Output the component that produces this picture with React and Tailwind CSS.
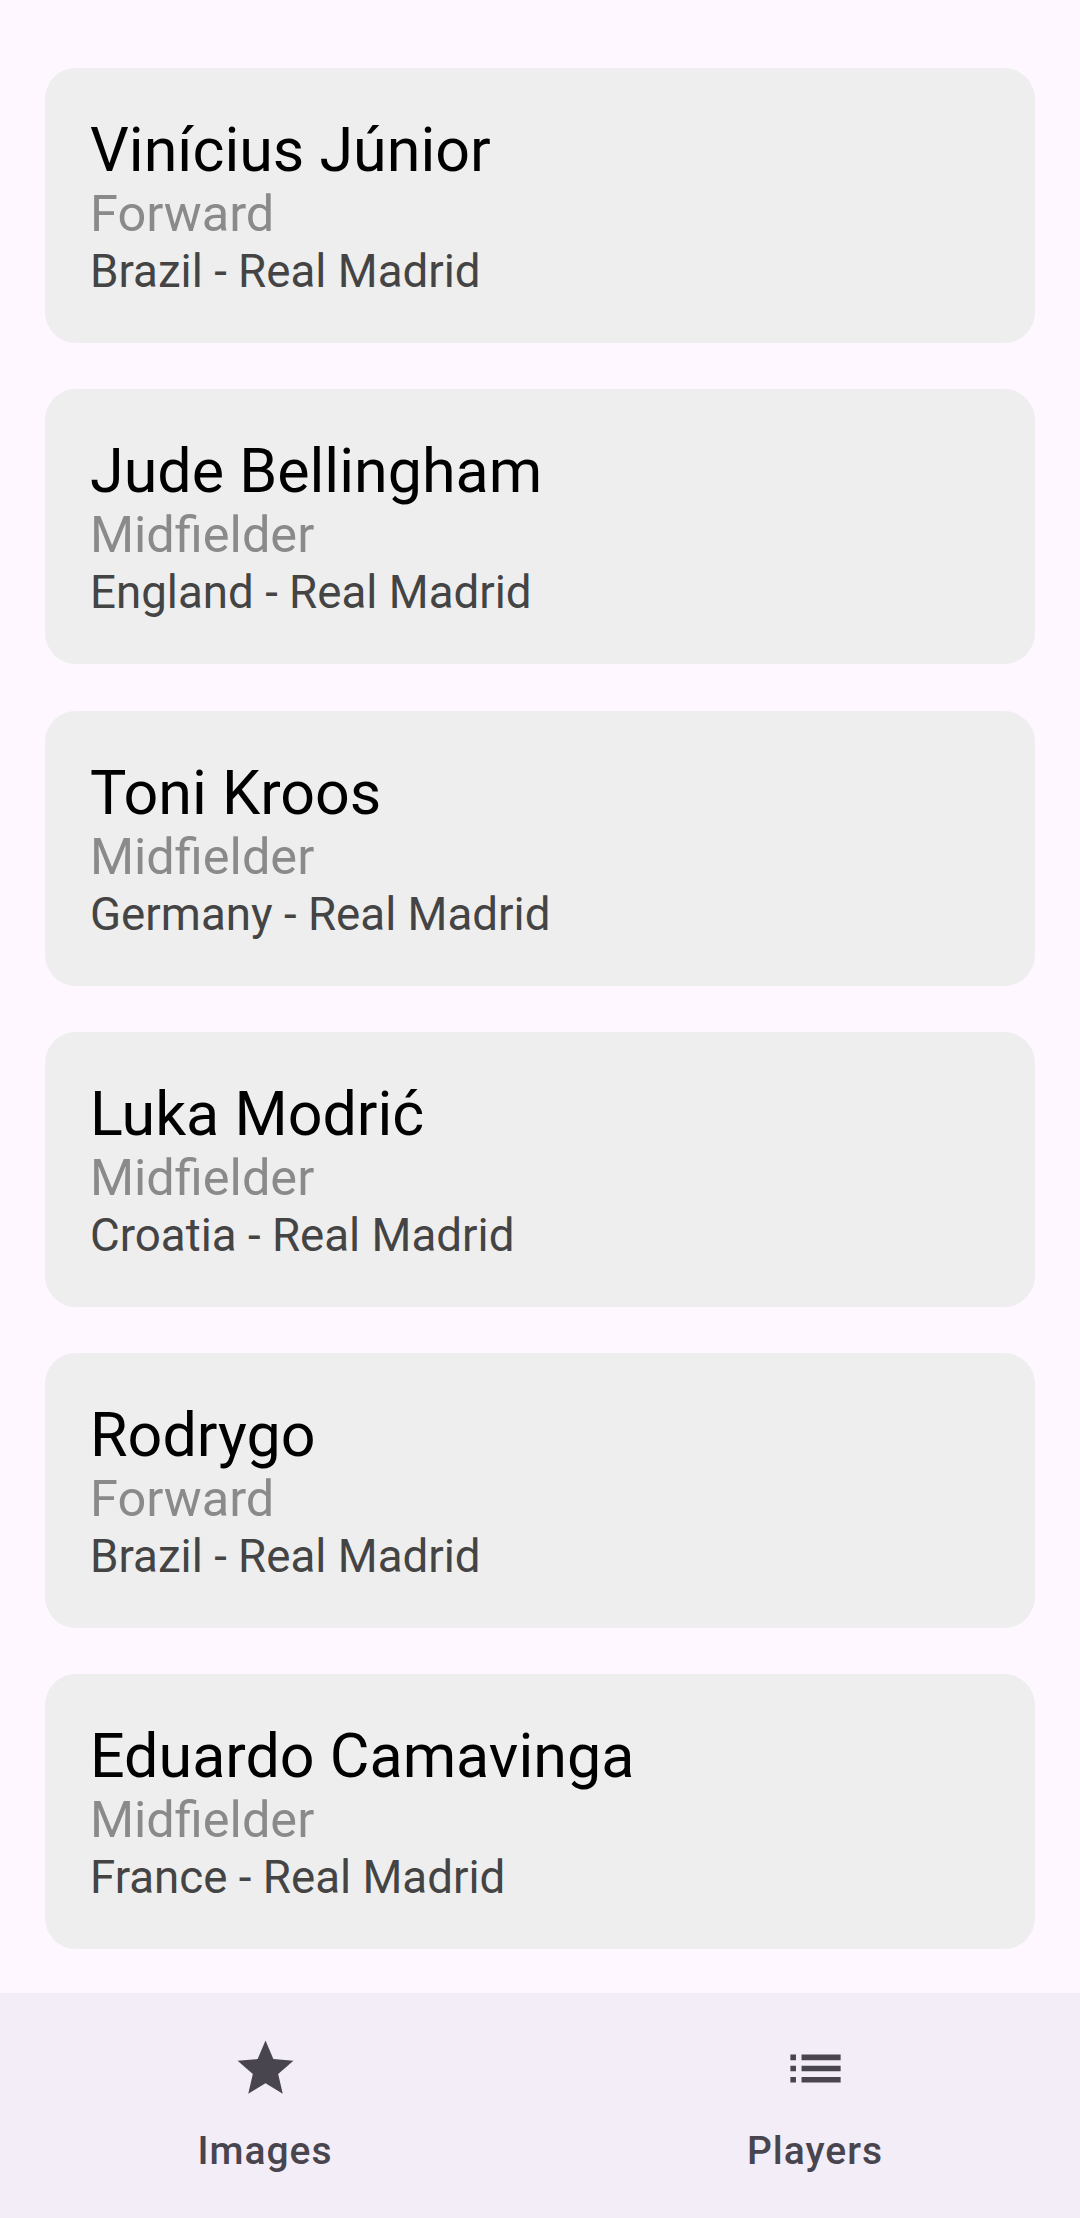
const players = [
  { name: "Vinícius Júnior", position: "Forward", country: "Brazil" },
  { name: "Jude Bellingham", position: "Midfielder", country: "England" },
  { name: "Toni Kroos", position: "Midfielder", country: "Germany" },
  { name: "Luka Modrić", position: "Midfielder", country: "Croatia" },
  { name: "Rodrygo", position: "Forward", country: "Brazil" },
  { name: "Eduardo Camavinga", position: "Midfielder", country: "France" },
];

function PlayerCard({ player }) {
  return (
    <div className="rounded-[31px] bg-[#eeeeee] pl-[45px] pr-[45px] pt-[47px] pb-[43px]">
      <p className="text-[61px] leading-[70px] text-black">{player.name}</p>
      <p className="text-[50.5px] leading-[58px] text-[#8a8a8a]">
        {player.position}
      </p>
      <p className="text-[45.7px] leading-[57px] text-[#444444]">
        {player.country} - Real Madrid
      </p>
    </div>
  );
}

function StarIcon() {
  return (
    <svg viewBox="0 0 24 24" className="w-[67px] h-[67px]" fill="#49454f">
      <path d="M12 17.27L18.18 21l-1.64-7.03L22 9.24l-7.19-.61L12 2 9.19 8.63 2 9.24l5.46 4.73L5.82 21z" />
    </svg>
  );
}

function ListIcon() {
  return (
    <svg viewBox="0 0 24 24" className="w-[67px] h-[67px]" fill="#49454f">
      <path d="M3 13h2v-2H3v2zm0 4h2v-2H3v2zm0-8h2V7H3v2zm4 4h14v-2H7v2zm0 4h14v-2H7v2zM7 7v2h14V7H7z" />
    </svg>
  );
}

function NavItem({ icon, label }) {
  return (
    <div className="w-[528px] flex flex-col items-center pt-[42px]">
      {icon}
      <span className="mt-[25px] text-[39px] leading-[48px] font-medium tracking-[1px] text-[#49454f]">
        {label}
      </span>
    </div>
  );
}

export default function App() {
  return (
    <div
      className="h-[2218px] w-[1080px] flex flex-col bg-[#fef7ff] overflow-hidden"
      style={{ fontFamily: "Roboto, 'Noto Sans', sans-serif" }}
    >
      <div className="flex-1 overflow-hidden px-[45px] pt-[68px] flex flex-col gap-[46.3px]">
        {players.map((p) => (
          <PlayerCard key={p.name} player={p} />
        ))}
      </div>
      <nav className="h-[225px] bg-[#f3edf7] flex justify-center gap-[22px]">
        <NavItem icon={<StarIcon />} label="Images" />
        <NavItem icon={<ListIcon />} label="Players" />
      </nav>
    </div>
  );
}
